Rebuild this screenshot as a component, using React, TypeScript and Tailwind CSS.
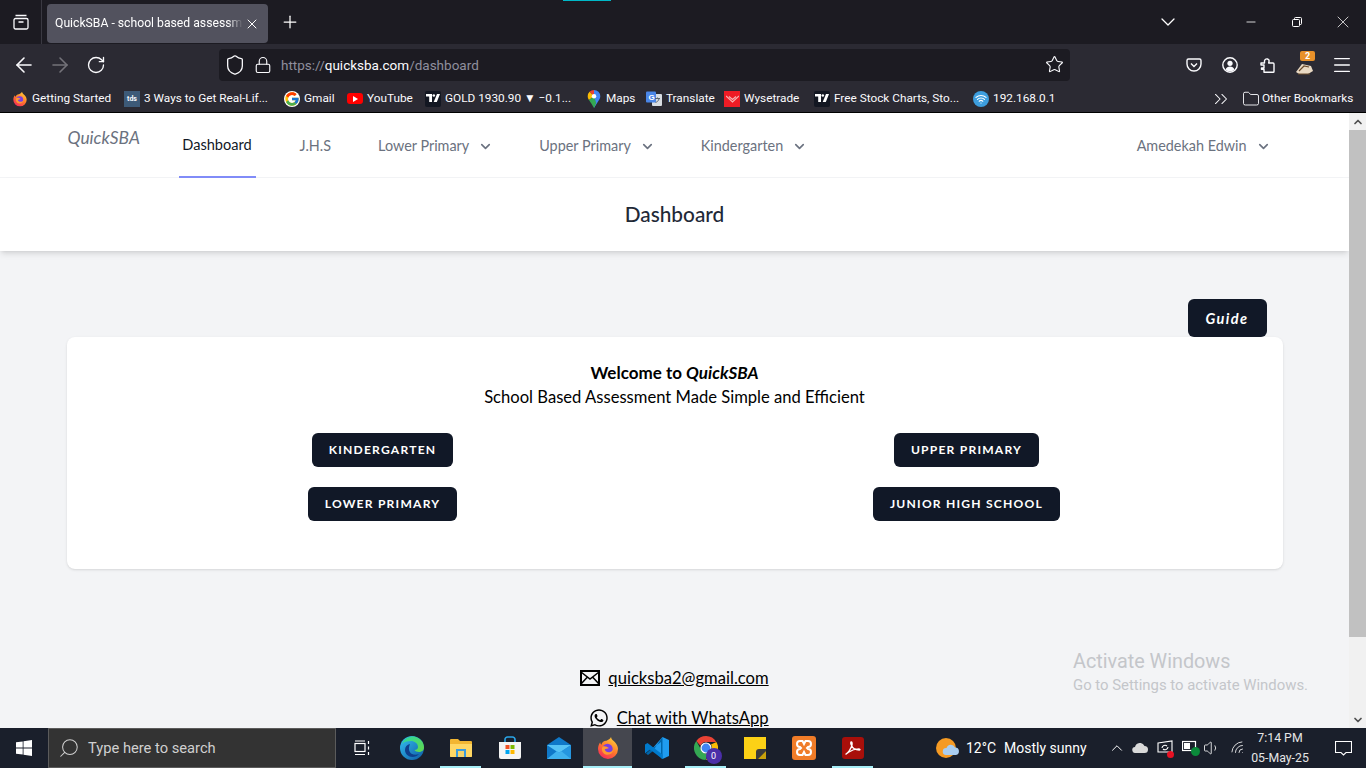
import { ChevronDown, ChevronUp, ChevronsRight, Folder, Plus, X, Minus, ArrowLeft, ArrowRight, RotateCw, Shield, Lock, Star, Menu, Search, Wifi, Volume1 } from "lucide-react";
import { FaWhatsapp } from "react-icons/fa";
import { FcGoogle } from "react-icons/fc";
import type { ReactNode } from "react";

const FirefoxIcon = ({ size = 16 }: { size?: number }) => (
  <svg width={size} height={size} viewBox="0 0 24 24">
    <defs>
      <linearGradient id="ffA" x1="0.8" y1="0" x2="0.2" y2="1">
        <stop offset="0" stopColor="#ffd23c" />
        <stop offset="0.5" stopColor="#ff7a2a" />
        <stop offset="1" stopColor="#f5245e" />
      </linearGradient>
    </defs>
    <path d="M15 1c.3 2.6 2.4 3.4 4 5.2 2.400 2.700 3 5.200 3 6.800a10 10 0 1 1-20 0c0-2.500.8-5 2.200-6.800.1 1.200.5 2 1.200 2.600C6 6 8.500 4.500 10.500 4.800 12 3.500 14.500 3 15 1z" fill="url(#ffA)" />
    <circle cx="11.500" cy="13" r="5.200" fill="#7a3ee0" />
    <path d="M6.500 10.500c2-.8 5 .2 6.500 1.600-1.500 1-3.500.8-4.300 1.400.5 2 3 3.200 5.500 2.500 1.600-.4 2.800-1.500 3.300-3 .2 3-2.700 6-6.500 5.700-3.800-.2-6.200-4-4.500-8.200z" fill="#ff9a2e" />
  </svg>
);

const TvIcon = () => (
  <span className="flex h-4 w-4 items-center justify-center rounded-[2px] bg-[#131722]">
    <svg width="14" height="9" viewBox="0 0 14 9" fill="#fff">
      <path d="M0 0h6v8H3.200V2.600H0z" />
      <circle cx="7.800" cy="1.500" r="1.300" />
      <path d="M11 0h3l-3.200 8H7.700z" />
    </svg>
  </span>
);

const MapsIcon = () => (
  <svg width="14" height="18" viewBox="0 0 14 20">
    <path d="M7 0a7 7 0 0 1 7 7c0 2-1 3.500-2 5L7 20z" fill="#4285f4" />
    <path d="M7 0a7 7 0 0 0-5 2l5 5z" fill="#ea4335" />
    <path d="M2 2a7 7 0 0 0-2 5c0 1.500.6 2.800 1.400 4L7 7z" fill="#fbbc04" />
    <path d="M1.400 11C3 13.500 5 16 7 20l2.500-5.500L7 7z" fill="#34a853" />
    <circle cx="7" cy="7" r="2.500" fill="#fff" />
  </svg>
);

const TranslateIcon = () => (
  <svg width="16" height="16" viewBox="0 0 16 16">
    <rect x="6" y="3" width="10" height="12" rx="1" fill="#d8dde3" />
    <rect x="0" y="0.500" width="10" height="11" rx="1" fill="#4a86e8" />
    <text x="2.500" y="9" fontSize="8" fill="#fff" fontFamily="Liberation Sans, sans-serif" fontWeight="700">G</text>
    <path d="M9 7.500h5M11.500 6.500v1M13 8c-.6 2-2 3-3.500 3.500" stroke="#5b6470" strokeWidth="1" fill="none" />
  </svg>
);

const WysetradeIcon = () => (
  <span className="flex h-4 w-4 items-center justify-center bg-[#ee1c25]">
    <svg width="13" height="8" viewBox="0 0 13 8" fill="none" stroke="#f7b3b3" strokeWidth="1.200">
      <path d="M0 1l6.500 6L13 1M3 1.500l3.500 3 3.500-3" />
    </svg>
  </span>
);

const WifiBookmark = () => (
  <span className="flex h-4 w-4 items-center justify-center rounded-full bg-[#3d9ede]">
    <Wifi size={12} color="#fff" strokeWidth={2.4} />
  </span>
);

const WindowsLogo = () => (
  <svg width="16" height="16" viewBox="0 0 16 16" fill="#fff">
    <path d="M0 2.300 6.700 1.400v6.200H0zM7.500 1.300 16 0v7.600H7.500zM0 8.400h6.700v6.200L0 13.700zM7.500 8.400H16V16l-8.500-1.300z" />
  </svg>
);

const EdgeIcon = () => (
  <svg width="24" height="24" viewBox="0 0 24 24">
    <defs>
      <linearGradient id="edgeA" x1="0" y1="0" x2="1" y2="1">
        <stop offset="0" stopColor="#35c1f1" />
        <stop offset="1" stopColor="#0c59a4" />
      </linearGradient>
      <linearGradient id="edgeB" x1="0" y1="0" x2="1" y2="1">
        <stop offset="0" stopColor="#2bd9a0" />
        <stop offset="1" stopColor="#64d84a" />
      </linearGradient>
    </defs>
    <circle cx="12" cy="12" r="12" fill="url(#edgeA)" />
    <path d="M2 8C4 2 10 0 14 .5c5 .6 10 5 10 11 0 3-2.500 4.500-5 4.500-2 0-4-1-4.500-2 2 0 3.500-1 3.500-3 0-3.500-3.500-6-7-6C7 5 3.500 6 2 8z" fill="url(#edgeB)" />
    <path d="M10 8c-3 .5-5 3-5 6 0 4 3.500 7 7.500 7 2.500 0 5-1 6.500-3-2 1-5 1.300-7.500-.3C9 16 8 12.500 10 8z" fill="#0f3f8c" />
  </svg>
);

const ExplorerIcon = () => (
  <svg width="22" height="20" viewBox="0 0 22 20">
    <path d="M0 2a1 1 0 0 1 1-1h7l2 2h11a1 1 0 0 1 1 1v14a1 1 0 0 1-1 1H1a1 1 0 0 1-1-1z" fill="#f2b632" />
    <path d="M0 6h22v12a1 1 0 0 1-1 1H1a1 1 0 0 1-1-1z" fill="#ffd764" />
    <rect x="6" y="11" width="10" height="8" fill="#3a9bdc" />
    <rect x="8" y="13" width="6" height="6" fill="#f2d36a" />
  </svg>
);

const StoreIcon = () => (
  <svg width="24" height="24" viewBox="0 0 24 24">
    <path d="M7 6V3.500A2.500 2.500 0 0 1 9.500 1h5A2.500 2.500 0 0 1 17 3.500V6" fill="none" stroke="#2aa5e8" strokeWidth="1.600" />
    <path d="M1 6h22v15a2 2 0 0 1-2 2H3a2 2 0 0 1-2-2z" fill="#f4f4f4" />
    <rect x="7.500" y="9" width="4" height="4" fill="#f25022" />
    <rect x="12.500" y="9" width="4" height="4" fill="#7fba00" />
    <rect x="7.500" y="14" width="4" height="4" fill="#00a4ef" />
    <rect x="12.500" y="14" width="4" height="4" fill="#ffb900" />
  </svg>
);

const MailIcon = () => (
  <svg width="24" height="22" viewBox="0 0 24 22">
    <path d="M12 0 24 8v14H0V8z" fill="#0f78c8" />
    <path d="M0 8h24L12 16z" fill="#57c3f5" />
    <path d="M12 16 24 8v14H12z" fill="#2a9ee6" opacity="0.8" />
    <path d="M0 22 10 14l2 2 2-2 10 8z" fill="#3fb1ee" />
  </svg>
);

const VsCodeIcon = () => (
  <svg width="24" height="24" viewBox="0 0 24 24">
    <path d="M17.500 1 24 4v16l-6.500 3L7 13z" fill="#1f9cf0" />
    <path d="M17.500 1v22l-1.500-1V6L7.500 12.500 3 9 1 10.500 5 14l-4 3.500L3 19l4.500-3.500" fill="#0065a9" />
    <path d="M0 8.500 2.500 7l15 11.500V23l-4-3L5 13.500l-5 4z" fill="#007acc" />
  </svg>
);

const ChromeIcon = () => (
  <div className="relative h-6 w-6">
    <svg width="24" height="24" viewBox="0 0 24 24">
      <path d="M12 0a12 12 0 0 1 10.400 6H12a6 6 0 0 0-5.600 3.800L2.300 5A12 12 0 0 1 12 0z" fill="#ea4335" />
      <path d="M22.400 6A12 12 0 0 1 12 24l4.800-8.700A6 6 0 0 0 17 8.400z" fill="#fbbc04" />
      <path d="M2.300 5l4.300 7.700a6 6 0 0 0 7 5L11.500 24A12 12 0 0 1 2.300 5z" fill="#34a853" />
      <circle cx="12" cy="12" r="5" fill="#4285f4" stroke="#fff" strokeWidth="1.200" />
    </svg>
    <span className="absolute -bottom-1 -right-1 flex h-4 w-4 items-center justify-center rounded-full bg-[#4b2fa8] text-[9px] leading-none text-white">0</span>
  </div>
);

const StickyIcon = () => (
  <svg width="22" height="22" viewBox="0 0 22 22">
    <path d="M0 0h22v13l-9 9H0z" fill="#fcd116" />
    <path d="M22 12h-7a3 3 0 0 0-3 3v7h2l8-8z" fill="#3b3b3b" />
    <path d="M22 14l-8 8h8z" fill="#c9a10c" />
  </svg>
);

const XamppIcon = () => (
  <svg width="24" height="24" viewBox="0 0 24 24">
    <rect width="24" height="24" rx="3" fill="#f07c28" />
    <path d="M8 5h2.500l1.500 3 1.500-3H16a3 3 0 0 1 0 6l-1 1 1 1a3 3 0 0 1 0 6h-2.500L12 16l-1.500 3H8a3 3 0 0 1 0-6l1-1-1-1a3 3 0 0 1 0-6z" fill="none" stroke="#fff" strokeWidth="2" />
  </svg>
);

const AcrobatIcon = () => (
  <svg width="22" height="22" viewBox="0 0 22 22">
    <rect width="22" height="22" rx="3" fill="#a80f0a" />
    <path d="M4 17c2-1 5-5 6-9 .4-2-.1-3-.7-3s-.9 1 0 3c1 2.600 4 5 8 5 1.200 0 .9-1.200-.8-1.200-3 0-7 1.400-10 3.500-1.400 1-2.700 2.200-2.500 1.700z" fill="none" stroke="#fff" strokeWidth="1.300" />
  </svg>
);

const WeatherIcon = () => (
  <svg width="24" height="22" viewBox="0 0 24 22">
    <circle cx="10" cy="11" r="10" fill="#f59a23" />
    <path d="M10 18a3.500 3.500 0 0 1 .5-7 4.500 4.500 0 0 1 8.500-.5 3.800 3.800 0 0 1 1 7.500z" fill="#a9cdf0" />
  </svg>
);

const BookmarkItem = ({ icon, label, className }: { icon: ReactNode; label: string; className: string }) => (
  <div className={`flex shrink-0 items-center gap-1 ${className}`}>
    <span className="flex w-4 shrink-0 justify-center">{icon}</span>
    <span>{label}</span>
  </div>
);

const TaskSlot = ({ children, active = false, bar = false }: { children: ReactNode; active?: boolean; bar?: boolean }) => (
  <div className={`relative flex h-10 w-[49px] shrink-0 items-center justify-center ${active ? "bg-[#45474f]" : ""}`}>
    {children}
    {(active || bar) && <span className={`absolute bottom-0 h-[2px] bg-[#a6eef7] ${active ? "inset-x-0" : "inset-x-1"}`} />}
  </div>
);

const NavLink = ({ label, className }: { label: string; className: string }) => (
  <div className={`flex h-full shrink-0 items-center gap-[9px] pt-px text-[14.400px] text-[#6b7280] ${className}`}>
    <span>{label}</span>
    <ChevronDown size={15} strokeWidth={2.6} />
  </div>
);

const SchoolButton = ({ label }: { label: string }) => (
  <button className="h-[34px] rounded-md bg-[#111827] px-[17px] text-[12.100px] font-bold tracking-[0.1em] text-white uppercase">
    {label}
  </button>
);

export default function App() {
  return (
    <div className="relative flex h-[768px] w-[1366px] flex-col overflow-hidden bg-white font-['Roboto',sans-serif]">
      <div className="absolute top-0 left-[563px] h-px w-[48px] bg-[#00b8c8]" />

      {/* tab strip */}
      <div className="flex h-[44px] shrink-0 items-start bg-[#1c1b22] text-white">
        <div className="flex h-full w-[42px] items-center justify-center border-r border-[#3a3942]">
          <svg width="16" height="16" viewBox="0 0 16 16" fill="none" stroke="#fbfbfe" strokeWidth="1.300">
            <rect x="1" y="4.500" width="14" height="10.500" rx="1.500" />
            <path d="M2.500 1.500h11M5.500 8h5" />
          </svg>
        </div>
        <div className="mt-1 ml-[5px] flex h-[39px] w-[221px] items-center rounded-[4px] bg-[#52525e] pr-[8px] pl-2 text-[12.200px]">
          <span className="w-[188px] overflow-hidden whitespace-nowrap [mask-image:linear-gradient(to_right,black_92%,transparent)]">QuickSBA - school based assessment</span>
          <X size={16} strokeWidth={1.5} className="ml-auto" />
        </div>
        <div className="flex h-full w-[44px] items-center justify-center"><Plus size={20} strokeWidth={1.5} /></div>
        <div className="ml-auto flex h-full w-[36px] items-center justify-center"><ChevronDown size={24} strokeWidth={1.3} /></div>
        <div className="ml-[42px] flex h-full w-[46px] items-center justify-center"><Minus size={14} strokeWidth={1.4} /></div>
        <div className="flex h-full w-[46px] items-center justify-center">
          <svg width="10" height="10" viewBox="0 0 10 10" fill="none" stroke="#fff"><rect x="0.500" y="2.500" width="7" height="7" rx="1" /><path d="M2.500 2.500V1.500a1 1 0 0 1 1-1h5a1 1 0 0 1 1 1v5a1 1 0 0 1-1 1h-1" /></svg>
        </div>
        <div className="flex h-full w-[46px] items-center justify-center"><X size={20} strokeWidth={0.9} /></div>
      </div>

      {/* toolbar */}
      <div className="flex h-[41px] shrink-0 items-center bg-[#2b2a33] pl-[6px] text-[#fbfbfe]">
        <div className="flex w-[36px] justify-center"><ArrowLeft size={24} strokeWidth={1.6} /></div>
        <div className="flex w-[36px] justify-center text-[#74737a]"><ArrowRight size={24} strokeWidth={1.6} /></div>
        <div className="flex w-[36px] justify-center"><RotateCw size={20} strokeWidth={1.6} /></div>
        <div className="ml-[105px] flex h-[32px] w-[851px] items-center rounded-[4px] bg-[#1c1b22] pr-[6px] pl-[5px] text-[13.500px]">
          <Shield size={22} strokeWidth={1.4} />
          <Lock size={18} strokeWidth={1.5} className="ml-[8px]" />
          <span className="ml-[9px] pt-[2px] text-[#8f8f9d]">https://<span className="text-[#fbfbfe]">quicksba.com</span>/dashboard</span>
          <Star size={19} strokeWidth={1.4} className="ml-auto" />
        </div>
        <div className="ml-[106px] flex w-[36px] justify-center">
          <svg width="16" height="16" viewBox="0 0 16 16" fill="none" stroke="#fbfbfe" strokeWidth="1.400"><path d="M2.500 2h11A1.500 1.500 0 0 1 15 3.500V7a7 7 0 0 1-14 0V3.500A1.500 1.500 0 0 1 2.500 2z" /><path d="M5 6.500 8 9.500l3-3" /></svg>
        </div>
        <div className="flex w-[36px] justify-center">
          <svg width="16" height="16" viewBox="0 0 16 16"><circle cx="8" cy="8" r="7.200" fill="none" stroke="#fbfbfe" strokeWidth="1.400" /><circle cx="8" cy="6.300" r="2.600" fill="#fbfbfe" /><path d="M3.500 12.500c.8-2 2.500-3 4.500-3s3.700 1 4.500 3A6 6 0 0 1 3.500 12.500z" fill="#fbfbfe" /></svg>
        </div>
        <div className="ml-px flex w-[36px] justify-center">
          <svg width="15" height="16" viewBox="0 0 15 16" fill="none" stroke="#fbfbfe" strokeWidth="1.400" strokeLinejoin="round"><path d="M1 6h3.500V4.500a2.300 2.300 0 0 1 3-2.500c1.300.4 1.800 1.500 1.500 2.500L8.700 6H13a1 1 0 0 1 1 1v7.500a.8.800 0 0 1-.8.800H4v-3H1.500V11H4V8H1z" /></svg>
        </div>
        <div className="relative ml-px flex w-[36px] justify-center">
          <svg width="17" height="12" viewBox="0 0 17 12" className="mt-2"><path d="M0 9 6 1l9 2 2 5-5 3H3z" fill="#e9d9c3" /><path d="M3 8l5-5 5 1M2 11h12" stroke="#6b4a2b" strokeWidth="1.200" fill="none" /></svg>
          <span className="absolute -top-[4px] left-[14px] h-[10px] w-[15px] rounded-[2px] bg-[#e8912a] text-center text-[9px] leading-[10px] font-bold text-white">2</span>
        </div>
        <div className="ml-[2px] flex w-[36px] justify-center"><Menu size={22} strokeWidth={1.4} /></div>
      </div>

      {/* bookmarks */}
      <div className="flex h-[28px] shrink-0 items-center border-b border-black bg-[#2b2a33] pl-3 text-[11.800px] whitespace-nowrap text-[#fbfbfe]">
        <BookmarkItem className="w-[112px]" icon={<FirefoxIcon />} label="Getting Started" />
        <BookmarkItem className="w-[160px]" icon={<span className="block h-4 w-4 bg-[#3d5a78] text-center text-[7px] leading-4 font-bold">tds</span>} label="3 Ways to Get Real-Lif..." />
        <BookmarkItem className="w-[63px]" icon={<FcGoogle size={16} className="rounded-full bg-white" />} label="Gmail" />
        <BookmarkItem className="w-[78px]" icon={<span className="flex h-[11px] w-4 items-center justify-center rounded-[3px] bg-[#f00]"><span className="h-0 w-0 border-y-[3px] border-l-[5px] border-y-transparent border-l-white" /></span>} label="YouTube" />
        <BookmarkItem className="w-[161px]" icon={<TvIcon />} label="GOLD 1930.90 ▼ −0.1..." />
        <BookmarkItem className="w-[60px]" icon={<MapsIcon />} label="Maps" />
        <BookmarkItem className="w-[78px]" icon={<TranslateIcon />} label="Translate" />
        <BookmarkItem className="w-[90px]" icon={<WysetradeIcon />} label="Wysetrade" />
        <BookmarkItem className="w-[159px]" icon={<TvIcon />} label="Free Stock Charts, Sto..." />
        <BookmarkItem className="w-[82px]" icon={<WifiBookmark />} label="192.168.0.1" />
        <ChevronsRight size={22} strokeWidth={1.1} className="ml-[155px]" />
        <Folder size={18} strokeWidth={1.2} className="ml-[10px]" />
        <span className="ml-[2px]">Other Bookmarks</span>
      </div>

      {/* page and scrollbar */}
      <div className="relative flex min-h-0 flex-1">
        <div className="min-w-0 flex-1 overflow-hidden bg-[#f3f4f6] font-['Lato',sans-serif] text-[#111827]">
          <nav className="h-[65px] border-b border-[#f3f4f6] bg-white">
            <div className="mx-auto flex h-[65px] max-w-[1280px] items-stretch pr-8 pl-8">
              <span className="w-[112px] shrink-0 pt-[12px] pl-px text-[17.400px] text-[#6b7280] italic">QuickSBA</span>
              <div className="flex h-full w-[77px] shrink-0 items-center justify-center border-b-2 border-[#818cf8] text-[14.600px] text-[#111827]">Dashboard</div>
              <div className="ml-[44px] flex h-full shrink-0 items-center pt-px text-[14.400px] text-[#6b7280]">J.H.S</div>
              <NavLink className="ml-[47px]" label="Lower Primary" />
              <NavLink className="ml-[46px]" label="Upper Primary" />
              <NavLink className="ml-[46px]" label="Kindergarten" />
              <NavLink className="ml-auto mr-[12px]" label="Amedekah Edwin" />
            </div>
          </nav>
          <header className="flex h-[73px] items-center justify-center bg-white shadow-md">
            <h1 className="pb-[2px] text-[20.800px] font-medium text-[#1f2937]">Dashboard</h1>
          </header>
          <main className="mx-auto max-w-[1280px] px-8 pt-12">
            <div className="flex justify-end pr-4">
              <button className="h-[38px] w-[79px] rounded-md bg-[#111827] pt-[2px] text-[14.500px] font-bold tracking-[0.1em] text-white italic">Guide</button>
            </div>
            <div className="h-[232px] rounded-lg bg-white px-6 pt-6 shadow-sm">
              <p className="text-center text-[17px] leading-6 font-bold text-black">Welcome to <em>QuickSBA</em></p>
              <p className="text-center text-[16.600px] leading-6 text-black">School Based Assessment Made Simple and Efficient</p>
              <div className="mt-6 grid grid-cols-2 gap-y-5">
                <div className="flex justify-center"><SchoolButton label="Kindergarten" /></div>
                <div className="flex justify-center"><SchoolButton label="Upper Primary" /></div>
                <div className="flex justify-center"><SchoolButton label="Lower Primary" /></div>
                <div className="flex justify-center"><SchoolButton label="Junior High School" /></div>
              </div>
            </div>
            <div className="mx-auto mt-[97px] flex w-fit flex-col items-end gap-[16px] text-[16.600px] text-black">
              <a className="flex h-6 items-center gap-2 underline">
                <svg width="20" height="16" viewBox="0 0 20 16" fill="none" stroke="#000" strokeWidth="2"><rect x="1" y="1" width="18" height="14" /><path d="M1 2l9 7 9-7M1 14l6-6.500M19 14l-6-6.500" strokeWidth="1.500" /></svg>
                quicksba2@gmail.com
              </a>
              <a className="flex h-6 items-center gap-2 underline">
                <FaWhatsapp size={20} />
                Chat with WhatsApp
              </a>
            </div>
          </main>
        </div>
        <div className="flex w-[17px] shrink-0 flex-col bg-[#f1f1f1] text-[#505050]">
          <div className="flex h-[17px] items-center justify-center"><ChevronUp size={12} strokeWidth={3.5} /></div>
          <div className="h-[507px] bg-[#c1c1c1]" />
          <div className="mt-auto flex h-[17px] items-center justify-center"><ChevronDown size={12} strokeWidth={3.5} /></div>
        </div>
        <div className="absolute top-[536px] left-[1073px] text-[#c4c6ca]">
          <p className="text-[19.800px] leading-[26px]">Activate Windows</p>
          <p className="text-[14.900px] leading-[20px]">Go to Settings to activate Windows.</p>
        </div>
      </div>

      {/* taskbar */}
      <div className="flex h-[40px] shrink-0 items-center bg-[#1a1f2b] text-white">
        <div className="flex h-full w-[48px] items-center justify-center"><WindowsLogo /></div>
        <div className="flex h-full w-[288px] items-center border border-[#5b5b5b] bg-[#333333] pl-[9px] text-[14.700px] text-[#d0d0d0]">
          <Search size={22} strokeWidth={1.1} className="-scale-x-100" />
          <span className="ml-[8px]">Type here to search</span>
        </div>
        <div className="flex h-full w-[51px] items-center justify-center">
          <svg width="16" height="16" viewBox="0 0 16 16" fill="none" stroke="#fff" strokeWidth="1.200"><rect x="1" y="3.500" width="10" height="8" /><path d="M1 1h10M1 14.500h10M14.500 1v3M14.500 6.500v3M14.500 12v3" /></svg>
        </div>
        <TaskSlot><EdgeIcon /></TaskSlot>
        <TaskSlot bar><ExplorerIcon /></TaskSlot>
        <TaskSlot><StoreIcon /></TaskSlot>
        <TaskSlot><MailIcon /></TaskSlot>
        <TaskSlot active><FirefoxIcon size={24} /></TaskSlot>
        <TaskSlot><VsCodeIcon /></TaskSlot>
        <TaskSlot bar><ChromeIcon /></TaskSlot>
        <TaskSlot><StickyIcon /></TaskSlot>
        <TaskSlot><XamppIcon /></TaskSlot>
        <TaskSlot bar><AcrobatIcon /></TaskSlot>
        <div className="ml-[59px] flex items-center"><WeatherIcon /></div>
        <span className="ml-[6px] w-[38px] pt-px text-[14px] whitespace-nowrap">12°C</span>
        <span className="w-[84px] pt-px text-[14px] whitespace-nowrap">Mostly sunny</span>
        <ChevronUp size={18} strokeWidth={1.3} className="ml-[20px]" />
        <svg width="16" height="10" viewBox="0 0 16 10" fill="#d9d9d9" className="ml-[6px]"><path d="M3.500 10a3 3 0 0 1-.5-6A5 5 0 0 1 12.500 3 3.500 3.500 0 0 1 12.500 10z" /></svg>
        <div className="relative ml-[9px] h-4 w-4">
          <svg width="16" height="15" viewBox="0 0 16 15" fill="none" stroke="#fff" strokeWidth="1.100"><path d="M1 3l14-2v11H1z" /><path d="M5 8a3 3 0 0 1 5-2M11 7a3 3 0 0 1-5 2" /></svg>
          <span className="absolute right-[-1px] bottom-[-2px] h-[7px] w-[7px] rounded-full bg-[#e81123]" />
        </div>
        <div className="relative ml-[9px] h-4 w-4">
          <svg width="16" height="12" viewBox="0 0 16 12" fill="none" stroke="#fff" strokeWidth="1.200"><rect x="0.500" y="1.500" width="13" height="9" /><rect x="2" y="3" width="6" height="6" fill="#fff" stroke="none" /></svg>
          <span className="absolute right-[-2px] bottom-0 h-[9px] w-[9px] rounded-full bg-[#0a8a3a]" />
        </div>
        <Volume1 size={18} strokeWidth={1.1} className="ml-[5px]" />
        <Wifi size={17} strokeWidth={1.1} className="ml-[9px] rotate-[-45deg]" />
        <div className="ml-[2px] flex w-[62px] flex-col items-center text-[12.300px] leading-[20px] whitespace-nowrap text-[#e6e6e6]">
          <span>7:14 PM</span>
          <span>05-May-25</span>
        </div>
        <div className="ml-[21px] flex w-[22px] justify-center">
          <svg width="17" height="15" viewBox="0 0 17 15" fill="none" stroke="#fff" strokeWidth="1.100"><path d="M.5.500h16v11h-5.500l-2.500 2.500L6 11.500H.5z" /></svg>
        </div>
      </div>
    </div>
  );
}
